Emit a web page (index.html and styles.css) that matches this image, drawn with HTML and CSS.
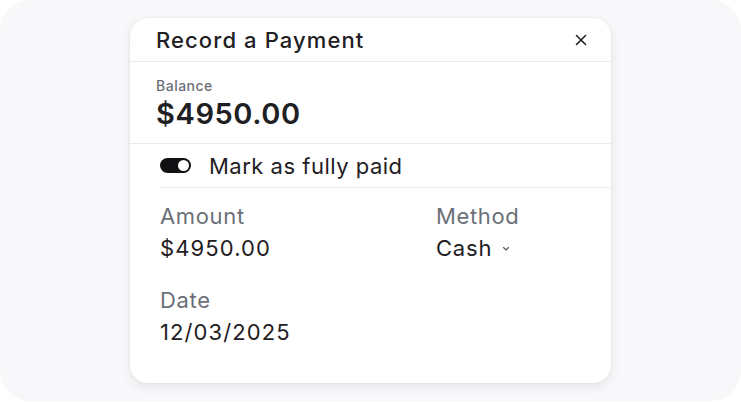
FILE: index.html
```html
<!DOCTYPE html>
<html lang="en">
<head>
<meta charset="utf-8">
<title>Record a Payment</title>
<link rel="stylesheet" href="styles.css">
</head>
<body>
<div class="frame">
  <div class="card">
    <div class="header">
      <h1 class="title">Record a Payment</h1>
      <button class="close" aria-label="Close">
        <svg width="12" height="12" viewBox="0 0 12 12"><path d="M1.5 1.5 L10.5 10.5 M10.5 1.5 L1.5 10.5" stroke="#1f2023" stroke-width="1.6" stroke-linecap="round" fill="none"/></svg>
      </button>
    </div>
    <div class="balance">
      <div class="balance-label">Balance</div>
      <div class="balance-value">$4950.00</div>
    </div>
    <div class="toggle-row">
      <span class="toggle"><span class="knob"></span></span>
      <span class="toggle-text">Mark as fully paid</span>
    </div>
    <div class="fields">
      <div class="field">
        <div class="label">Amount</div>
        <div class="value num">$4950.00</div>
      </div>
      <div class="field">
        <div class="label">Method</div>
        <div class="value">Cash <svg class="chev" width="8" height="6" viewBox="0 0 8 6"><path d="M1.5 1.5 L4 4 L6.5 1.5" stroke="#555" stroke-width="1.1" fill="none" stroke-linecap="round" stroke-linejoin="round"/></svg></div>
      </div>
      <div class="field">
        <div class="label">Date</div>
        <div class="value num">12/03/2025</div>
      </div>
    </div>
  </div>
</div>
</body>
</html>
```
FILE: styles.css
```css
html, body {
  margin: 0;
  padding: 0;
  background: #ffffff;
}
body {
  font-family: Inter, "Noto Sans", sans-serif;
  color: #1f2023;
}
.frame {
  width: 741px;
  height: 401px;
  background: #f8f8fa;
  border-radius: 30px;
  box-sizing: border-box;
  padding-top: 18px;
  display: flex;
  justify-content: center;
  align-items: flex-start;
}
.card {
  width: 481px;
  height: 365px;
  box-sizing: border-box;
  background: #ffffff;
  border-radius: 18px;
  box-shadow: 0 0 0 1px rgba(0,0,0,0.025), 0 4px 12px rgba(0,0,0,0.08);
  display: flex;
  flex-direction: column;
}
.header {
  height: 44px;
  flex: none;
  box-sizing: border-box;
  padding: 0 24px 0 26px;
  display: flex;
  align-items: center;
  justify-content: space-between;
  border-bottom: 1px solid #ebebed;
}
.title {
  margin: 0;
  font-size: 22px;
  font-weight: 500;
  line-height: 30px;
  letter-spacing: 1.1px;
  color: #1f2023;
}
.close {
  border: 0;
  background: none;
  padding: 0;
  width: 12px;
  height: 12px;
  display: flex;
}
.balance {
  padding: 15px 0 11px 26px;
  border-bottom: 1px solid #ebebed;
}
.balance-label {
  font-size: 14px;
  line-height: 18px;
  color: #6b6f78;
  font-weight: 500;
  letter-spacing: 0.5px;
}
.balance-value {
  margin-top: 1px;
  font-size: 29px;
  line-height: 36px;
  font-weight: 600;
  letter-spacing: 0.6px;
  color: #1f2023;
}
.toggle-row {
  margin-left: 29px;
  height: 44px;
  flex: none;
  box-sizing: border-box;
  border-bottom: 1px solid #ebebed;
  display: flex;
  align-items: center;
  padding-left: 1px;
  gap: 18px;
}
.toggle {
  width: 31px;
  height: 15px;
  border-radius: 8px;
  background: #111113;
  display: flex;
  align-items: center;
  justify-content: flex-end;
  padding-right: 2px;
  box-sizing: border-box;
}
.knob {
  width: 11px;
  height: 11px;
  border-radius: 50%;
  background: #ffffff;
}
.toggle-text {
  font-size: 22px;
  line-height: 30px;
  letter-spacing: 0.5px;
  color: #1f2023;
}
.fields {
  padding: 13px 0 0 30px;
  display: grid;
  grid-template-columns: 276px 1fr;
  row-gap: 21px;
}
.label {
  font-size: 22px;
  line-height: 31px;
  letter-spacing: 0.65px;
  color: #6b6f78;
}
.value {
  font-size: 22px;
  line-height: 32px;
  letter-spacing: 0.8px;
  color: #1f2023;
  display: flex;
  align-items: center;
}
.value.num {
  letter-spacing: 1.1px;
}
.chev {
  margin-left: 10px;
  margin-top: 2px;
}
```
